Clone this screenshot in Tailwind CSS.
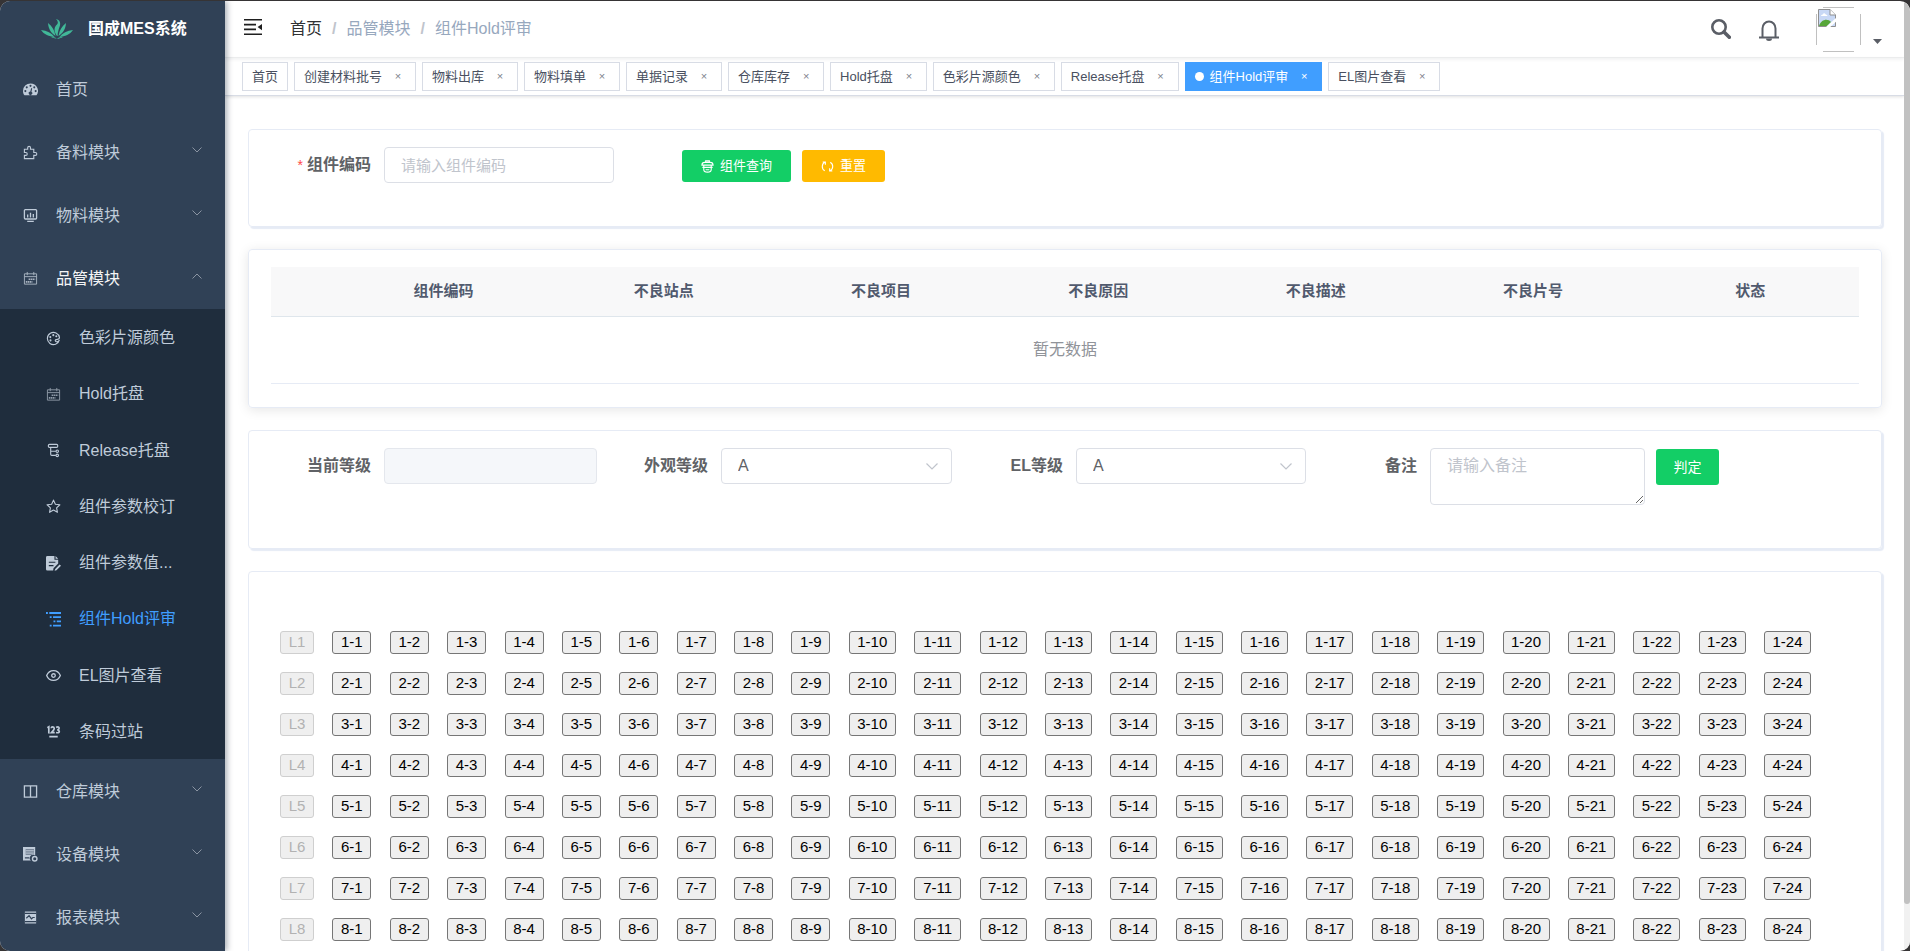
<!DOCTYPE html>
<html lang="zh-CN">
<head>
<meta charset="utf-8">
<title>国成MES系统</title>
<script src="https://cdn.jsdelivr.net/npm/@tailwindcss/browser@4"></script>
</head>
<body class="h-screen overflow-hidden bg-[#363435] pt-px text-base font-['Liberation_Sans','Noto_Sans_CJK_SC',sans-serif]">
<div class="flex h-full overflow-hidden rounded-[10px] bg-white">

  <!-- Sidebar -->
  <aside class="z-10 flex w-[225px] shrink-0 flex-col bg-[#304156] text-[#bfcbd9] shadow-[2px_0_6px_rgba(0,21,41,0.35)]">
    <a href="#" class="flex h-14 shrink-0 items-center gap-[15px] pl-[41px] text-white">
      <svg class="h-5 w-8" viewBox="0 0 32 20" fill="#41b898"><path d="M16 17C12.500 12 13 8 16 5.500C17.500 4 17 2 15 0C19 1 19.800 4 18.800 7C17.800 10 16.600 13 16.600 17Z"/><path d="M14.500 17C10 14 7.500 10 7 4C11 7 13.500 11 14.500 17Z"/><path d="M17.500 17C18.500 11 21 7 25 4C24.500 10 22 14 17.500 17Z"/><path d="M13.500 18C8 17.500 3 15.500 0 11C6 11.500 10.500 14 13.500 18Z"/><path d="M18.500 18C21.500 14 26 11.500 32 11C29 15.500 24 17.500 18.500 18Z"/><path d="M10 18.200Q14 17.500 16 20Q18 17.500 22 18.200L16.500 20Z"/></svg>
      <span class="leading-6 font-bold">国成MES系统</span>
    </a>
    <nav class="flex flex-col">
      <a href="#" class="flex h-[63px] items-center gap-[18px] pt-0.5 pl-[23px]">
        <svg class="size-[15px]" viewBox="0 0 16 16" fill="currentColor" fill-rule="evenodd"><path d="M8 1.500A8 8 0 0 0 0 9.500C0 11.300.6 13 1.600 14.200H14.400A8 8 0 0 0 8 1.500ZM8 3a1.100 1.100 0 1 1 0 2.200A1.100 1.100 0 0 1 8 3ZM4 4.600a1.100 1.100 0 1 1 0 2.200 1.100 1.100 0 0 1 0-2.200ZM12 4.600a1.100 1.100 0 1 1 0 2.200 1.100 1.100 0 0 1 0-2.200ZM2.500 8.600a1.100 1.100 0 1 1 0 2.200 1.100 1.100 0 0 1 0-2.200ZM13.500 8.600a1.100 1.100 0 1 1 0 2.200 1.100 1.100 0 0 1 0-2.200ZM8.700 6.500L9.800 6.800 9 10.300A1.900 1.900 0 1 1 7.800 10Z"/></svg>
        <span>首页</span>
      </a>
      <a href="#" class="flex h-[63px] items-center gap-[18px] pt-0.5 pl-[23px]">
        <svg class="size-[15px]" viewBox="0 0 16 16" fill="none" stroke="currentColor" stroke-width="1.200"><path d="M1.500 4.500H5V3A1.500 1.500 0 0 1 8 3V4.500H11.500V8H13.200A1.400 1.400 0 0 1 13.200 11H11.500V14.500H1.500V11H3A1.500 1.500 0 0 0 3 8H1.500Z"/></svg>
        <span class="flex-1">备料模块</span>
        <svg class="mr-[23px] mb-1.5 h-1.5 w-2.5" viewBox="0 0 10 6" fill="none" stroke="#8a94a2"><path d="M.5.5L5 5 9.500.5"/></svg>
      </a>
      <a href="#" class="flex h-[63px] items-center gap-[18px] pt-0.5 pl-[23px]">
        <svg class="size-[15px]" viewBox="0 0 16 16" fill="none" stroke="currentColor" stroke-width="1.400"><rect x="1.500" y="1.700" width="13" height="10" rx="1"/><path d="M5 10V7M8 10V5M11 10V6.500M4.500 14.200H11.500"/></svg>
        <span class="flex-1">物料模块</span>
        <svg class="mr-[23px] mb-1.5 h-1.5 w-2.5" viewBox="0 0 10 6" fill="none" stroke="#8a94a2"><path d="M.5.5L5 5 9.500.5"/></svg>
      </a>
      <a href="#" class="flex h-[63px] items-center gap-[18px] pt-0.5 pl-[23px] text-[#f4f4f5]">
        <svg class="size-[15px] text-[#a9b4c1]" viewBox="0 0 16 16" fill="none" stroke="currentColor"><path d="M1.500 3H14.500V14H1.500ZM1.500 6H14.500M4.500 1V4.500M11.500 1V4.500"/><path d="M6 8.800H13M3 11.500H10" stroke-width="1.800" stroke-dasharray="1.700.5"/></svg>
        <span class="flex-1">品管模块</span>
        <svg class="mr-[23px] mb-1.5 h-1.5 w-2.5" viewBox="0 0 10 6" fill="none" stroke="#8a94a2"><path d="M.5 5.500L5 1 9.500 5.500"/></svg>
      </a>
      <div class="grid h-[450px] auto-rows-fr bg-[#1f2d3d]">
        <a href="#" class="flex items-center gap-[18px] pt-0.5 pl-[46px]">
          <svg class="size-[15px]" viewBox="0 0 16 16" fill="none" stroke="currentColor" stroke-width="1.200"><path d="M14.300 9.500A6.500 6.500 0 1 1 14.400 7C14.400 8.800 12 9 10.800 9.200 9.300 9.600 9.800 11.300 11 11.500 12.500 11.700 13.500 11 14.300 9.500Z"/><circle cx="4.600" cy="6.500" r=".5"/><circle cx="7.800" cy="4.400" r=".5"/><circle cx="11" cy="5.600" r=".5"/><circle cx="4.800" cy="10" r=".5"/></svg>
          <span>色彩片源颜色</span>
        </a>
        <a href="#" class="flex items-center gap-[18px] pt-0.5 pl-[46px]">
          <svg class="size-[15px] text-[#8f9aa8]" viewBox="0 0 16 16" fill="none" stroke="currentColor"><path d="M1.500 3H14.500V14H1.500ZM1.500 6H14.500M4.500 1V4.500M11.500 1V4.500"/><path d="M6 8.800H13M3 11.500H10" stroke-width="1.800" stroke-dasharray="1.700.5"/></svg>
          <span>Hold托盘</span>
        </a>
        <a href="#" class="flex items-center gap-[18px] pt-0.5 pl-[46px]">
          <svg class="size-[15px]" viewBox="0 0 16 16" fill="none" stroke="currentColor" stroke-width="1.200"><rect x="2.500" y="1.500" width="10" height="3.200" rx="1.200"/><path d="M5 4.700V12Q5 13.200 6.200 13.200H10.500M5 8.800H10.500"/><circle cx="12" cy="8.800" r="1.300"/><circle cx="12" cy="13.200" r="1.300"/></svg>
          <span>Release托盘</span>
        </a>
        <a href="#" class="flex items-center gap-[18px] pt-0.5 pl-[46px]">
          <svg class="size-[15px]" viewBox="0 0 16 16" fill="none" stroke="currentColor" stroke-width="1.200" stroke-linejoin="round"><path d="M8 1.200L10 5.600 14.800 6.100 11.300 9.400 12.200 14.200 8 11.800 3.800 14.200 4.700 9.400 1.200 6.100 6 5.600Z"/></svg>
          <span>组件参数校订</span>
        </a>
        <a href="#" class="flex items-center gap-[18px] pt-0.5 pl-[46px]">
          <svg class="size-[15px]" viewBox="0 0 16 16" fill="currentColor"><path fill-rule="evenodd" d="M1.500 0H9V4H13V8L8 13 7.600 15.500H1.500Q0 15.500 0 14V1.500Q0 0 1.500 0ZM3 6V7.300H10V6ZM3 9.500V10.800H8V9.500Z"/><path d="M10.200 0L13 3H10.200ZM14.500 9L16 10.300 11.200 15.200 9.200 15.700 9.800 13.800Z"/></svg>
          <span>组件参数值...</span>
        </a>
        <a href="#" aria-current="page" class="flex items-center gap-[18px] pt-0.5 pl-[46px] text-[#409eff]">
          <svg class="size-[15px]" viewBox="0 0 16 16" fill="currentColor"><path d="M0 0H2V2H0ZM3.500 0H16V2H3.500ZM4 4.500H6V6.500H4ZM7.500 4.500H16V6.500H7.500ZM8 9H10V11H8ZM11.500 9H16V11H11.500ZM4 13.500H6V15.500H4ZM7.500 13.500H16V15.500H7.500Z"/></svg>
          <span>组件Hold评审</span>
        </a>
        <a href="#" class="flex items-center gap-[18px] pt-0.5 pl-[46px]">
          <svg class="size-[15px]" viewBox="0 0 16 16" fill="none" stroke="currentColor" stroke-width="1.400"><path d="M.7 8C3.500 1 12.500 1 15.300 8C12.500 15 3.500 15 .7 8Z"/><circle cx="8" cy="8" r="1.900"/></svg>
          <span>EL图片查看</span>
        </a>
        <a href="#" class="flex items-center gap-[18px] pt-0.5 pl-[46px]">
          <svg class="size-[15px]" viewBox="0 0 16 16" fill="none" stroke="currentColor" stroke-width="1.800"><path d="M1.500 4L3 3V10M5.500 4.500Q5.600 3 7.200 3T8.800 4.800Q8.800 6 5.800 9.200H9.300M10.800 3.600Q14 2.200 14 4.600 14 6 12 6.200 14.200 6.500 14.200 8 13.800 10 10.700 9M3.500 13.500H12.500"/></svg>
          <span>条码过站</span>
        </a>
      </div>
      <a href="#" class="flex h-[63px] items-center gap-[18px] pt-0.5 pl-[23px]">
        <svg class="size-[15px]" viewBox="0 0 16 16" fill="none" stroke="currentColor" stroke-width="1.400"><path d="M1.500 2H14.500V14H1.500ZM8 2V14"/></svg>
        <span class="flex-1">仓库模块</span>
        <svg class="mr-[23px] mb-1.5 h-1.5 w-2.5" viewBox="0 0 10 6" fill="none" stroke="#8a94a2"><path d="M.5.5L5 5 9.500.5"/></svg>
      </a>
      <a href="#" class="flex h-[63px] items-center gap-[18px] pt-0.5 pl-[23px]">
        <svg class="size-[15px]" viewBox="0 0 16 16"><path fill="currentColor" fill-rule="evenodd" d="M0 0H13V9A3.500 3.500 0 0 0 8.500 14.500H0ZM3 2V8.500H11.500V2ZM2 11V12.200H6.500V11Z"/><path fill="currentColor" fill-opacity=".5" d="M3 2H11.500V8.500H3Z"/><path stroke="currentColor" d="M3 4H11.500M3 6.500H11.500"/><circle cx="12.500" cy="12.500" r="2.400" fill="none" stroke="currentColor" stroke-width="1.500"/></svg>
        <span class="flex-1">设备模块</span>
        <svg class="mr-[23px] mb-1.5 h-1.5 w-2.5" viewBox="0 0 10 6" fill="none" stroke="#8a94a2"><path d="M.5.5L5 5 9.500.5"/></svg>
      </a>
      <a href="#" class="flex h-[63px] items-center gap-[18px] pt-0.5 pl-[23px]">
        <svg class="size-[15px]" viewBox="0 0 16 16"><path fill="currentColor" d="M2 1.500H14V14.500H2Z"/><path fill="none" stroke="#304156" stroke-width="1.300" d="M2 3.700H14M2 12.500H14M3.500 8.800L6.500 6 9 9.500 10.500 8H12.500"/></svg>
        <span class="flex-1">报表模块</span>
        <svg class="mr-[23px] mb-1.5 h-1.5 w-2.5" viewBox="0 0 10 6" fill="none" stroke="#8a94a2"><path d="M.5.5L5 5 9.500.5"/></svg>
      </a>
    </nav>
  </aside>

  <main class="flex min-w-0 flex-1 flex-col">
    <!-- Top bar -->
    <header class="flex h-[57px] shrink-0 items-center border-b border-[#f0f1f2] pr-[22px] pl-[19px] shadow-[0_1px_4px_rgba(0,21,41,0.08)]">
      <button type="button" aria-label="折叠菜单" class="mb-1">
        <svg class="h-4 w-[18px]" viewBox="0 0 18 16" fill="#1f1f1f"><path d="M0 0H18V1.600H0ZM0 4.800H12V6.400H0ZM0 9.600H12V11.200H0ZM0 14.400H18V16H0ZM18 5V11.200L13.600 8.100Z"/></svg>
      </button>
      <nav aria-label="面包屑" class="ml-7 flex items-center gap-2.5 leading-6">
        <a href="#" class="text-[#303133]">首页</a>
        <span class="font-bold text-[#c0c4cc]">/</span>
        <span class="text-[#97a8be]">品管模块</span>
        <span class="font-bold text-[#c0c4cc]">/</span>
        <span class="text-[#97a8be]">组件Hold评审</span>
      </nav>
      <div class="ml-auto flex items-center">
        <button type="button" aria-label="搜索">
          <svg class="size-5" viewBox="0 0 20 20" fill="none" stroke="#5a5e66"><circle cx="8" cy="8" r="6.700" stroke-width="2.600"/><path d="M13 13L18.300 18.300" stroke-width="3.600" stroke-linecap="round"/></svg>
        </button>
        <button type="button" aria-label="通知" class="mt-1 ml-7">
          <svg class="h-[22px] w-5" viewBox="0 0 20 22" fill="none" stroke="#5a5e66" stroke-width="2"><path d="M3.500 17V8.500A6.500 7 0 0 1 16.500 8.500V17"/><path d="M0 17.500H20"/><path d="M7 18.500A3 2.500 0 0 0 13 18.500Z" fill="#5a5e66" stroke="none"/></svg>
        </button>
        <button type="button" aria-label="用户菜单" class="ml-[37px] flex items-end gap-3">
          <svg class="size-[45px]" viewBox="0 0 45 45"><path fill="none" stroke="#c0c0c0" d="M7 .5H38M7 44.500H38M.5 7V38M44.500 7V38"/><path fill="#c8d8f5" stroke="#8f8f8f" d="M2.500 2.500H14L19.500 8V19.500H2.500Z"/><path fill="#fff" stroke="#8f8f8f" d="M14 2.500V8H19.500"/><path fill="#fff" d="M5 9Q5 7.500 6.700 7.500 8 5 9.800 7.500 11.500 7.500 11.500 9Z"/><path fill="#57a639" d="M3 19C5 12 12 11 15 15L11 19Z"/><path stroke="#fff" stroke-width="3" d="M11 21L21 12"/></svg>
          <svg class="mb-2 h-[5px] w-[9px]" viewBox="0 0 9 5" fill="#5a5e66"><path d="M0 0H9L4.500 5Z"/></svg>
        </button>
      </div>
    </header>

    <!-- Open pages -->
    <div id="tabs" class="flex h-[38px] shrink-0 gap-1.5 border-b border-[#d8dce5] py-1 pl-[17px] text-[13px] text-[#495060] shadow-[0_1px_3px_rgba(0,0,0,0.12)]"></div>

    <div class="flex flex-col gap-[22px] pt-[33px] pr-[22px] pl-[23px]">
      <!-- Query form -->
      <form class="grid grid-cols-[354fr_1267fr] rounded border border-[#e6ebf5] pt-[17px] pb-[43px] pl-[11px] shadow-[2px_2px_1px_#e6ebf5]">
        <div class="flex h-9 items-center">
          <label for="code" class="w-[124px] shrink-0 pr-[13px] text-right font-bold text-[#606266]"><span class="mr-1 text-sm font-normal text-[#ff4949]">*</span>组件编码</label>
          <input id="code" type="text" placeholder="请输入组件编码" class="h-9 w-full min-w-0 rounded border border-[#dcdfe6] px-4 text-[15px] placeholder:text-[#c0c4cc]">
        </div>
        <div class="flex items-center gap-[11px] pt-0.5 pl-[68px] text-[13px] text-white">
          <button type="button" class="flex h-8 items-center gap-1.5 rounded-[3px] bg-[#13ce66] px-[19px]">
            <svg class="size-[13px]" viewBox="0 0 14 14" fill="none" stroke="#fff" stroke-width="1.200"><path d="M1 5.500Q1 2.500 4 2.500H10Q13 2.500 13 5.500ZM5 2.500V1H9V2.500M3 5.500V7.500M11 5.500V7.500M1.500 8H12.500M3 8V10.500Q3 13 7 13T11 10.500V8M5 10.500H9"/></svg>
            组件查询
          </button>
          <button type="button" class="flex h-8 items-center gap-1.5 rounded-[3px] bg-[#ffba00] px-[19px]">
            <svg class="size-[13px]" viewBox="0 0 14 14" fill="none" stroke="#fff" stroke-width="1.200"><path d="M4 11.600A5.300 5.300 0 0 1 4.500 2.200M10 2.400A5.300 5.300 0 0 1 9.500 11.800M1.800 2.200H4.700V5M12.200 11.800H9.300V9"/></svg>
            重置
          </button>
        </div>
      </form>

      <!-- Result table -->
      <section class="rounded border border-[#e6ebf5] px-[22px] pt-[17px] pb-[23px] shadow-[0_2px_12px_rgba(0,0,0,0.1)]">
        <table class="w-full table-fixed border-collapse">
          <thead>
            <tr class="h-[49px] border-b border-[#dfe6ec] bg-[#f8f8f9] text-[15px] text-[#515a6e]">
              <th class="w-[61px]"></th><th class="w-[223px]">组件编码</th><th>不良站点</th><th>不良项目</th><th>不良原因</th><th>不良描述</th><th>不良片号</th><th>状态</th>
            </tr>
          </thead>
          <tbody>
            <tr class="h-[67px] border-b border-[#e6ebf5]"><td colspan="8" class="text-center text-[#909399]">暂无数据</td></tr>
          </tbody>
        </table>
      </section>

      <!-- Judgement form -->
      <form class="grid grid-cols-[337fr_355fr_354fr_339fr_236fr] rounded border border-[#e6ebf5] pt-[17px] pb-[43px] pl-[11px] shadow-[2px_2px_1px_#e6ebf5]">
        <div class="flex items-start">
          <label for="cur" class="w-[124px] shrink-0 pr-[13px] text-right leading-9 font-bold text-[#606266]">当前等级</label>
          <input id="cur" type="text" disabled class="h-9 w-full min-w-0 rounded border border-[#e4e7ed] bg-[#f5f7fa]">
        </div>
        <div class="flex items-start">
          <label for="look" class="w-[124px] shrink-0 pr-[13px] text-right leading-9 font-bold text-[#606266]">外观等级</label>
          <div class="relative min-w-0 flex-1">
            <select id="look" class="h-9 w-full appearance-none rounded border border-[#dcdfe6] px-4 text-[#606266]"><option>A</option><option>B</option></select>
            <svg class="pointer-events-none absolute top-[15px] right-3.5 h-[7px] w-3" viewBox="0 0 12 7" fill="none" stroke="#c0c4cc" stroke-width="1.200"><path d="M.5.5L6 6 11.500.5"/></svg>
          </div>
        </div>
        <div class="flex items-start">
          <label for="el" class="w-[124px] shrink-0 pr-[13px] text-right leading-9 font-bold text-[#606266]">EL等级</label>
          <div class="relative min-w-0 flex-1">
            <select id="el" class="h-9 w-full appearance-none rounded border border-[#dcdfe6] px-4 text-[#606266]"><option>A</option><option>B</option></select>
            <svg class="pointer-events-none absolute top-[15px] right-3.5 h-[7px] w-3" viewBox="0 0 12 7" fill="none" stroke="#c0c4cc" stroke-width="1.200"><path d="M.5.5L6 6 11.500.5"/></svg>
          </div>
        </div>
        <div class="flex items-start">
          <label for="note" class="w-[124px] shrink-0 pr-[13px] text-right leading-9 font-bold text-[#606266]">备注</label>
          <textarea id="note" placeholder="请输入备注" class="block h-[57px] w-full min-w-0 resize-y rounded border border-[#dcdfe6] px-4 py-[5px] leading-6 placeholder:text-[#c0c4cc]"></textarea>
        </div>
        <div class="flex items-start pt-px pl-[11px]">
          <button type="button" class="h-9 w-[63px] rounded-[3px] bg-[#13ce66] text-sm text-white">判定</button>
        </div>
      </form>

      <!-- Cell map: one row of buttons per string -->
      <section id="cells" class="flex flex-col gap-[18px] rounded border border-[#e6ebf5] pt-[59px] pr-[70px] pb-14 pl-[31px] text-[15px] shadow-[2px_2px_1px_#e6ebf5]"></section>
    </div>
  </main>

  <!-- Page scroll indicator -->
  <div class="w-1.5 shrink-0 bg-[#f1f1f1]"><div class="h-[95%] rounded-b-full bg-[#c1c1c1]"></div></div>
</div>

<script>
  const pages = ['首页', '创建材料批号', '物料出库', '物料填单', '单据记录', '仓库库存', 'Hold托盘', '色彩片源颜色', 'Release托盘', '组件Hold评审', 'EL图片查看'];
  document.getElementById('tabs').innerHTML = pages.map((name, i) => {
    if (name === '组件Hold评审') {
      return `<a href="#" class="flex items-center border border-[#409eff] bg-[#409eff] px-[9px] text-white"><span class="mr-1.5 size-[9px] rounded-full bg-white"></span>${name}<span class="ml-2 w-4 text-center text-[11px]">×</span></a>`;
    }
    const close = i ? '<span class="ml-2 w-4 text-center text-[11px] text-[#7d828c]">×</span>' : '';
    return `<a href="#" class="flex items-center border border-[#d8dce5] bg-white px-[9px]">${name}${close}</a>`;
  }).join('');

  let rows = '';
  for (let r = 1; r <= 8; r++) {
    rows += `<div class="flex justify-between"><button type="button" disabled class="h-[23px] w-[34px] rounded-[3px] border border-[#cfcfcf] bg-[#efefef] leading-5 text-[#b2b2b2]">L${r}</button>`;
    for (let c = 1; c <= 24; c++) {
      rows += c < 10
        ? `<button type="button" class="h-[23px] w-[39px] rounded-[3px] border border-[#767676] bg-[#efefef] leading-5 text-black">${r}-${c}</button>`
        : `<button type="button" class="h-[23px] w-[47px] rounded-[3px] border border-[#767676] bg-[#efefef] leading-5 text-black">${r}-${c}</button>`;
    }
    rows += '</div>';
  }
  document.getElementById('cells').innerHTML = rows;
</script>
</body>
</html>
